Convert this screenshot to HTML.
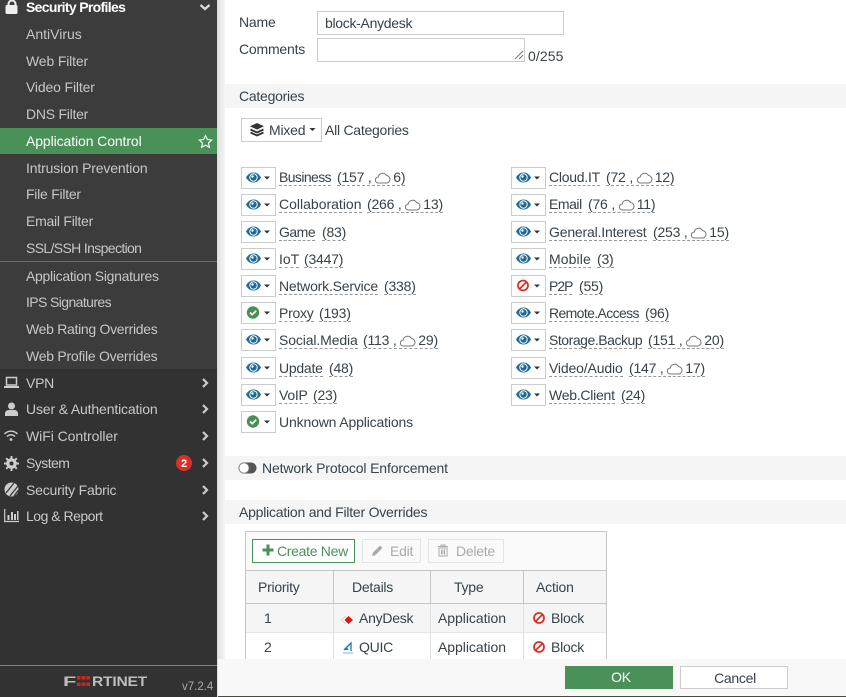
<!DOCTYPE html>
<html><head><meta charset="utf-8">
<style>
html,body{margin:0;padding:0;width:846px;height:697px;overflow:hidden;background:#fff;font-family:"Liberation Sans",sans-serif;font-size:14px;letter-spacing:-.2px;color:#37424a}
.a{position:absolute}
.t{position:absolute;line-height:18px;white-space:nowrap}
.s{color:#c6c6c6}
.s.h{color:#fff;font-weight:bold}
.m{color:#c8c8c8}
.b{position:absolute;width:33px;height:20px;border:1px solid #ccc;background:#fff}
.b svg{position:absolute;left:0;top:0}
.u{border-bottom:1px dashed #999;line-height:15px;display:inline-block}
.band{position:absolute;left:225px;width:621px;height:24px;background:#f5f5f5}
.chev{position:absolute;left:201px}
.c{vertical-align:-2px;margin:0 2px 0 0}
.line{position:absolute;background:#c6c6c6}
</style></head><body>
<svg width="0" height="0" style="position:absolute"><defs>
<g id="eye"><path d="M4 9.500C6 6 8.500 4.500 11.500 4.500S17 6 19 9.500C17 13 14.500 14.500 11.500 14.500S6 13 4 9.500Z" fill="#1b6a99"/><circle cx="11.500" cy="9.500" r="3.700" fill="#1b6a99" stroke="#fff" stroke-width="1"/><circle cx="10.500" cy="8.500" r="1.200" fill="#fff"/><path d="M22 8.500h6l-3 3z" fill="#333"/></g>
<g id="chk"><circle cx="11" cy="9.500" r="6.200" fill="#4a8f55"/><path d="M8 9.500l2.200 2.200 4-4" fill="none" stroke="#fff" stroke-width="1.700"/><path d="M22 8.500h6l-3 3z" fill="#333"/></g>
<g id="blk"><circle cx="11" cy="9.500" r="5" fill="none" stroke="#d8332b" stroke-width="1.800"/><path d="M7.500 13l7-7" stroke="#d8332b" stroke-width="1.800"/><path d="M22 8.500h6l-3 3z" fill="#333"/></g>
<g id="cl"><path d="M3.500 12a3 3 0 0 1-.3-6A4.500 4.500 0 0 1 11.500 4.500 3.800 3.800 0 0 1 12 12Z" fill="#fff" stroke="#777" stroke-width="1"/></g>
<path id="ch" d="M2 1l4 4-4 4" fill="none" stroke="#ccc" stroke-width="2.200"/>
</defs></svg>

<!-- sidebar -->
<div class="a" style="left:0;top:0;width:217px;height:369px;background:#3c3c3c"></div>
<div class="a" style="left:0;top:369px;width:217px;height:328px;background:#323232"></div>
<div class="a" style="left:217px;top:0;width:8px;height:697px;background:linear-gradient(90deg,#dadada 0,#e6e6e6 2px,#f2f2f2 7px,#f6f6f6 8px)"></div>
<div class="a" style="left:0;top:128px;width:217px;height:26px;background:#4a9158"></div>
<div class="a" style="left:0;top:261px;width:217px;height:1px;background:#6a6a6a"></div>
<div class="a" style="left:0;top:665px;width:217px;height:1px;background:#808080"></div>

<svg class="a" style="left:4px;top:0" width="16" height="15"><path d="M4.500 5V4a3.500 3.500 0 0 1 7 0v1" fill="none" stroke="#eee" stroke-width="2"/><rect x="1.500" y="5" width="12" height="9" rx="1.500" fill="#eee"/></svg>
<div class="t s h" style="left:26px;top:-2px;letter-spacing:-.66px">Security Profiles</div>
<svg class="a" style="left:199px;top:3px" width="12" height="9"><path d="M1.500 2l4.500 4 4.500-4" fill="none" stroke="#ddd" stroke-width="2.200"/></svg>

<div class="t s" style="left:26px;top:25px;letter-spacing:0">AntiVirus</div>
<div class="t s" style="left:26px;top:52px;letter-spacing:-.15px">Web Filter</div>
<div class="t s" style="left:26px;top:78px;letter-spacing:-.15px">Video Filter</div>
<div class="t s" style="left:26px;top:105px;letter-spacing:-.25px">DNS Filter</div>
<div class="t" style="left:26px;top:132px;color:#fff;letter-spacing:-.1px">Application Control</div>
<svg class="a" style="left:198px;top:134px" width="15" height="15"><path d="M7.500 1.500l1.900 4 4.300.5-3.200 3 .9 4.300-3.900-2.200-3.900 2.200.9-4.300-3.200-3 4.300-.5z" fill="none" stroke="#fff" stroke-width="1.100"/></svg>
<div class="t s" style="left:26px;top:159px;letter-spacing:-.15px">Intrusion Prevention</div>
<div class="t s" style="left:26px;top:185px;letter-spacing:-.25px">File Filter</div>
<div class="t s" style="left:26px;top:212px;letter-spacing:-.25px">Email Filter</div>
<div class="t s" style="left:26px;top:239px;letter-spacing:-.64px">SSL/SSH Inspection</div>
<div class="t s" style="left:26px;top:267px;letter-spacing:-.3px">Application Signatures</div>
<div class="t s" style="left:26px;top:293px;letter-spacing:-.6px">IPS Signatures</div>
<div class="t s" style="left:26px;top:320px;letter-spacing:-.3px">Web Rating Overrides</div>
<div class="t s" style="left:26px;top:347px;letter-spacing:-.25px">Web Profile Overrides</div>

<svg class="a" style="left:4px;top:376px" width="15" height="14"><rect x="2.500" y="1.500" width="10" height="7.500" fill="none" stroke="#ccc" stroke-width="1.500"/><rect x="0" y="10" width="15" height="2" fill="#ccc"/></svg>
<div class="t m" style="left:26px;top:374px;letter-spacing:-.25px">VPN</div>
<svg class="a" style="left:4px;top:402px" width="15" height="15"><circle cx="7.500" cy="4" r="3.500" fill="#ccc"/><path d="M1 14v-2.500A3.500 3.500 0 0 1 4.500 8h6a3.500 3.500 0 0 1 3.500 3.500V14Z" fill="#ccc"/></svg>
<div class="t m" style="left:26px;top:400px;letter-spacing:-.15px">User &amp; Authentication</div>
<svg class="a" style="left:3px;top:430px" width="16" height="12"><path d="M1.500 4a9 9 0 0 1 13 0M4 6.500a5.500 5.500 0 0 1 8 0" fill="none" stroke="#ccc" stroke-width="1.400"/><circle cx="8" cy="9.500" r="1.400" fill="#ccc"/></svg>
<div class="t m" style="left:26px;top:427px;letter-spacing:-.05px">WiFi Controller</div>
<svg class="a" style="left:4px;top:456px" width="15" height="15"><circle cx="7.500" cy="7.500" r="3.800" fill="none" stroke="#ccc" stroke-width="3"/><path d="M7.500 0v15M0 7.500h15M2.200 2.200l10.600 10.600M12.800 2.200L2.200 12.800" stroke="#ccc" stroke-width="2"/><circle cx="7.500" cy="7.500" r="2" fill="#323232"/></svg>
<div class="t m" style="left:26px;top:454px;letter-spacing:-.55px">System</div>
<svg class="a" style="left:176px;top:455px" width="16" height="16"><circle cx="8" cy="8" r="8" fill="#d9302a"/><text x="8" y="12" font-family="Liberation Sans" font-size="11" font-weight="bold" fill="#fff" text-anchor="middle">2</text></svg>
<svg class="a" style="left:4px;top:482px" width="15" height="15"><circle cx="7.500" cy="7.500" r="7" fill="#ccc"/><path d="M14 4L6 14M14.500 8L10 14M10 1L2 11" stroke="#323232" stroke-width="1.200"/></svg>
<div class="t m" style="left:26px;top:481px;letter-spacing:-.2px">Security Fabric</div>
<svg class="a" style="left:4px;top:509px" width="15" height="14"><path d="M.7 0v12.500H15" fill="none" stroke="#ccc" stroke-width="1.200"/><path d="M3.500 6h2v5h-2zM7 3h2v8H7zM10 5h2v6h-2zM13 2h1.500v9H13z" fill="#ccc"/></svg>
<div class="t m" style="left:26px;top:507px;letter-spacing:-.5px">Log &amp; Report</div>
<svg class="chev" style="top:378px" width="9" height="10"><use href="#ch"/></svg>
<svg class="chev" style="top:404px" width="9" height="10"><use href="#ch"/></svg>
<svg class="chev" style="top:431px" width="9" height="10"><use href="#ch"/></svg>
<svg class="chev" style="top:458px" width="9" height="10"><use href="#ch"/></svg>
<svg class="chev" style="top:485px" width="9" height="10"><use href="#ch"/></svg>
<svg class="chev" style="top:511px" width="9" height="10"><use href="#ch"/></svg>

<svg class="a" style="left:62px;top:674px" width="86" height="14">
<text x="1" y="12" font-family="Liberation Sans" font-size="14" font-weight="bold" fill="#bdbdbd" textLength="13" lengthAdjust="spacingAndGlyphs">F</text>
<path d="M15 2h3.500v3.500H15zM19.500 2h4v3.500h-4zM24.500 2h3.500v3.500h-3.500zM15 8.500h3.500V12H15zM24.500 8.500h3.500V12h-3.500zM19.500 8.500h4V12h-4z" fill="#c8281f"/>
<text x="30" y="12" font-family="Liberation Sans" font-size="14" font-weight="bold" fill="#bdbdbd" textLength="55" lengthAdjust="spacingAndGlyphs">RTINET</text>
</svg>
<div class="t" style="left:182px;top:678px;color:#aaa;font-size:11.500px;letter-spacing:0">v7.2.4</div>

<!-- form -->
<div class="t" style="left:239px;top:13px">Name</div>
<div class="a" style="left:317px;top:11px;width:245px;height:22px;border:1px solid #ccc"></div>
<div class="t" style="left:325px;top:14px;letter-spacing:-.3px">block-Anydesk</div>
<div class="t" style="left:239px;top:40px">Comments</div>
<div class="a" style="left:317px;top:38px;width:206px;height:22px;border:1px solid #ccc"></div>
<svg class="a" style="left:514px;top:50px" width="10" height="10"><path d="M1 9l8-8M5 9l4-4" stroke="#777" stroke-width="1"/></svg>
<div class="t" style="left:528px;top:47px;letter-spacing:.1px">0/255</div>

<div class="band" style="top:84px"></div>
<div class="t" style="left:239px;top:87px;letter-spacing:-.25px">Categories</div>
<div class="a" style="left:241px;top:118px;width:79px;height:22px;border:1px solid #ccc"></div>
<svg class="a" style="left:249px;top:122px" width="16" height="15"><path d="M8 1l7 3.300-7 3.300-7-3.300z" fill="#333"/><path d="M1.500 7.500L8 10.500l6.500-3M1.500 10.500L8 13.500l6.500-3" fill="none" stroke="#333" stroke-width="1.800"/></svg>
<div class="t" style="left:269px;top:121px">Mixed</div>
<svg class="a" style="left:309px;top:127px" width="7" height="5"><path d="M.5 1h6L3.500 4z" fill="#333"/></svg>
<div class="t" style="left:325px;top:121px;letter-spacing:-.25px">All Categories</div>

<!-- left column -->
<div class="b" style="left:241px;top:167px"><svg width="33" height="20"><use href="#eye"/></svg></div>
<div class="t" style="left:279px;top:168px;letter-spacing:-.6px"><span class="u">Business</span></div>
<div class="t" style="left:337px;top:168px"><span class="u">(157 , <svg class="c" width="16" height="13"><use href="#cl"/></svg>6)</span></div>
<div class="b" style="left:241px;top:194px"><svg width="33" height="20"><use href="#eye"/></svg></div>
<div class="t" style="left:279px;top:195px;letter-spacing:0"><span class="u">Collaboration</span></div>
<div class="t" style="left:367px;top:195px"><span class="u">(266 , <svg class="c" width="16" height="13"><use href="#cl"/></svg>13)</span></div>
<div class="b" style="left:241px;top:221px"><svg width="33" height="20"><use href="#eye"/></svg></div>
<div class="t" style="left:279px;top:223px;letter-spacing:-.5px"><span class="u">Game</span></div>
<div class="t" style="left:322px;top:223px"><span class="u">(83)</span></div>
<div class="b" style="left:241px;top:248px"><svg width="33" height="20"><use href="#eye"/></svg></div>
<div class="t" style="left:279px;top:250px;letter-spacing:0"><span class="u">IoT</span></div>
<div class="t" style="left:304px;top:250px"><span class="u">(3447)</span></div>
<div class="b" style="left:241px;top:275px"><svg width="33" height="20"><use href="#eye"/></svg></div>
<div class="t" style="left:279px;top:277px"><span class="u">Network.Service</span></div>
<div class="t" style="left:384px;top:277px"><span class="u">(338)</span></div>
<div class="b" style="left:241px;top:302px"><svg width="33" height="20"><use href="#chk"/></svg></div>
<div class="t" style="left:279px;top:304px;letter-spacing:-.25px"><span class="u">Proxy</span></div>
<div class="t" style="left:319px;top:304px"><span class="u">(193)</span></div>
<div class="b" style="left:241px;top:329px"><svg width="33" height="20"><use href="#eye"/></svg></div>
<div class="t" style="left:279px;top:331px;letter-spacing:-.12px"><span class="u">Social.Media</span></div>
<div class="t" style="left:363px;top:331px"><span class="u">(113 , <svg class="c" width="16" height="13"><use href="#cl"/></svg>29)</span></div>
<div class="b" style="left:241px;top:357px"><svg width="33" height="20"><use href="#eye"/></svg></div>
<div class="t" style="left:279px;top:359px;letter-spacing:-.25px"><span class="u">Update</span></div>
<div class="t" style="left:329px;top:359px"><span class="u">(48)</span></div>
<div class="b" style="left:241px;top:384px"><svg width="33" height="20"><use href="#eye"/></svg></div>
<div class="t" style="left:279px;top:386px;letter-spacing:-.25px"><span class="u">VoIP</span></div>
<div class="t" style="left:313px;top:386px"><span class="u">(23)</span></div>
<div class="b" style="left:241px;top:411px"><svg width="33" height="20"><use href="#chk"/></svg></div>
<div class="t" style="left:279px;top:413px;letter-spacing:-.15px">Unknown Applications</div>

<!-- right column -->
<div class="b" style="left:511px;top:167px"><svg width="33" height="20"><use href="#eye"/></svg></div>
<div class="t" style="left:549px;top:168px;letter-spacing:-.25px"><span class="u">Cloud.IT</span></div>
<div class="t" style="left:606px;top:168px"><span class="u">(72 , <svg class="c" width="16" height="13"><use href="#cl"/></svg>12)</span></div>
<div class="b" style="left:511px;top:194px"><svg width="33" height="20"><use href="#eye"/></svg></div>
<div class="t" style="left:549px;top:195px;letter-spacing:-.45px"><span class="u">Email</span></div>
<div class="t" style="left:588px;top:195px"><span class="u">(76 , <svg class="c" width="16" height="13"><use href="#cl"/></svg>11)</span></div>
<div class="b" style="left:511px;top:221px"><svg width="33" height="20"><use href="#eye"/></svg></div>
<div class="t" style="left:549px;top:223px;letter-spacing:-.18px"><span class="u">General.Interest</span></div>
<div class="t" style="left:653px;top:223px"><span class="u">(253 , <svg class="c" width="16" height="13"><use href="#cl"/></svg>15)</span></div>
<div class="b" style="left:511px;top:248px"><svg width="33" height="20"><use href="#eye"/></svg></div>
<div class="t" style="left:549px;top:250px;letter-spacing:.1px"><span class="u">Mobile</span></div>
<div class="t" style="left:597px;top:250px"><span class="u">(3)</span></div>
<div class="b" style="left:511px;top:275px"><svg width="33" height="20"><use href="#blk"/></svg></div>
<div class="t" style="left:549px;top:277px;letter-spacing:-1px"><span class="u">P2P</span></div>
<div class="t" style="left:579px;top:277px"><span class="u">(55)</span></div>
<div class="b" style="left:511px;top:302px"><svg width="33" height="20"><use href="#eye"/></svg></div>
<div class="t" style="left:549px;top:304px;letter-spacing:-.63px"><span class="u">Remote.Access</span></div>
<div class="t" style="left:645px;top:304px"><span class="u">(96)</span></div>
<div class="b" style="left:511px;top:329px"><svg width="33" height="20"><use href="#eye"/></svg></div>
<div class="t" style="left:549px;top:331px;letter-spacing:-.46px"><span class="u">Storage.Backup</span></div>
<div class="t" style="left:648px;top:331px"><span class="u">(151 , <svg class="c" width="16" height="13"><use href="#cl"/></svg>20)</span></div>
<div class="b" style="left:511px;top:357px"><svg width="33" height="20"><use href="#eye"/></svg></div>
<div class="t" style="left:549px;top:359px;letter-spacing:-.15px"><span class="u">Video/Audio</span></div>
<div class="t" style="left:629px;top:359px"><span class="u">(147 , <svg class="c" width="16" height="13"><use href="#cl"/></svg>17)</span></div>
<div class="b" style="left:511px;top:384px"><svg width="33" height="20"><use href="#eye"/></svg></div>
<div class="t" style="left:549px;top:386px;letter-spacing:-.25px"><span class="u">Web.Client</span></div>
<div class="t" style="left:621px;top:386px"><span class="u">(24)</span></div>

<div class="band" style="top:456px"></div>
<svg class="a" style="left:238px;top:462px" width="19" height="12"><rect x=".5" y=".5" width="18" height="11" rx="5.500" fill="#555"/><circle cx="6" cy="6" r="5" fill="#fff" stroke="#888" stroke-width=".8"/></svg>
<div class="t" style="left:262px;top:459px;letter-spacing:-.14px">Network Protocol Enforcement</div>

<div class="band" style="top:500px"></div>
<div class="t" style="left:239px;top:503px;letter-spacing:-.22px">Application and Filter Overrides</div>

<!-- table -->
<div class="a" style="left:245px;top:531px;width:362px;height:128px;border:1px solid #c6c6c6;border-bottom:0;box-sizing:border-box;background:#fff"></div>
<div class="a" style="left:246px;top:532px;width:360px;height:38px;background:#fafafa"></div>
<div class="a" style="left:246px;top:571px;width:360px;height:32px;background:#f5f5f5"></div>
<div class="a" style="left:246px;top:604px;width:360px;height:28px;background:#f5f5f5"></div>
<div class="line" style="left:246px;top:570px;width:360px;height:1px"></div>
<div class="line" style="left:246px;top:603px;width:360px;height:1px"></div>
<div class="line" style="left:246px;top:632px;width:360px;height:1px;background:#e6e6e6"></div>
<div class="line" style="left:333px;top:571px;width:1px;height:32px"></div>
<div class="line" style="left:430px;top:571px;width:1px;height:32px"></div>
<div class="line" style="left:523px;top:571px;width:1px;height:32px"></div>
<div class="line" style="left:333px;top:604px;width:1px;height:55px;background:#e0e0e0"></div>
<div class="line" style="left:430px;top:604px;width:1px;height:55px;background:#e0e0e0"></div>
<div class="line" style="left:523px;top:604px;width:1px;height:55px;background:#e0e0e0"></div>

<div class="a" style="left:252px;top:539px;width:101px;height:22px;border:1px solid #4a9158;background:#fff"></div>
<svg class="a" style="left:262px;top:544px" width="12" height="12"><path d="M6 .5v11M.5 6h11" stroke="#4a9158" stroke-width="3"/></svg>
<div class="t" style="left:277px;top:542px;color:#4a9158;letter-spacing:-.3px">Create New</div>
<div class="a" style="left:362px;top:539px;width:57px;height:22px;border:1px solid #e4e4e4"></div>
<svg class="a" style="left:371px;top:544px" width="13" height="13"><path d="M1 12l.8-3.300L9 1.500l2.500 2.500-7.200 7.200z" fill="#aaa"/></svg>
<div class="t" style="left:390px;top:542px;color:#aaa;letter-spacing:-.25px">Edit</div>
<div class="a" style="left:428px;top:539px;width:74px;height:22px;border:1px solid #e4e4e4"></div>
<svg class="a" style="left:437px;top:544px" width="12" height="13"><path d="M1 2.500h10M4 2.500V1h4v1.500M2 4h8v8H2zM4.500 5.500v5M6 5.500v5M7.500 5.500v5" fill="none" stroke="#aaa" stroke-width="1"/></svg>
<div class="t" style="left:456px;top:542px;color:#aaa;letter-spacing:-.25px">Delete</div>

<div class="t" style="left:258px;top:578px;letter-spacing:-.25px">Priority</div>
<div class="t" style="left:352px;top:578px;letter-spacing:-.25px">Details</div>
<div class="t" style="left:454px;top:578px;letter-spacing:-.25px">Type</div>
<div class="t" style="left:536px;top:578px">Action</div>

<div class="t" style="left:264px;top:609px">1</div>
<svg class="a" style="left:341px;top:614px" width="13" height="12"><path d="M.5 6L4 2.500 7.500 6 4 9.500Z" fill="none" stroke="#ccc" stroke-width=".7"/><path d="M3.500 6L7.500 2 12 6 7.500 10Z" fill="#e01515"/></svg>
<div class="t" style="left:359px;top:609px;letter-spacing:-.25px">AnyDesk</div>
<div class="t" style="left:438px;top:609px;letter-spacing:-.05px">Application</div>
<svg class="a" style="left:532px;top:611px" width="14" height="14"><circle cx="7" cy="7" r="5" fill="none" stroke="#d8332b" stroke-width="1.800"/><path d="M3.500 10.500l7-7" stroke="#d8332b" stroke-width="1.800"/></svg>
<div class="t" style="left:551px;top:609px;letter-spacing:-.25px">Block</div>

<div class="t" style="left:264px;top:638px">2</div>
<svg class="a" style="left:342px;top:641px" width="12" height="13"><path d="M2 9l7-7v8" fill="none" stroke="#1b79b8" stroke-width="1.300"/><path d="M1 12h10" stroke="#6bb8e0" stroke-width="1"/><path d="M2 9l3-3 1.500 3z" fill="#1b79b8"/></svg>
<div class="t" style="left:359px;top:638px;letter-spacing:-.25px">QUIC</div>
<div class="t" style="left:438px;top:638px;letter-spacing:-.05px">Application</div>
<svg class="a" style="left:532px;top:640px" width="14" height="14"><circle cx="7" cy="7" r="5" fill="none" stroke="#d8332b" stroke-width="1.800"/><path d="M3.500 10.500l7-7" stroke="#d8332b" stroke-width="1.800"/></svg>
<div class="t" style="left:551px;top:638px;letter-spacing:-.25px">Block</div>

<!-- footer -->
<div class="a" style="left:218px;top:659px;width:628px;height:37px;background:#f8f8f8"></div>
<div class="a" style="left:218px;top:696px;width:628px;height:1px;background:#4a4a40"></div>
<div class="a" style="left:565px;top:666px;width:108px;height:23px;background:#4a9158"></div>
<div class="t" style="left:567px;top:668px;width:108px;text-align:center;color:#fff">OK</div>
<div class="a" style="left:680px;top:666px;width:106px;height:21px;border:1px solid #ccc;background:#fff"></div>
<div class="t" style="left:681px;top:669px;width:108px;text-align:center;letter-spacing:-.3px">Cancel</div>
</body></html>
